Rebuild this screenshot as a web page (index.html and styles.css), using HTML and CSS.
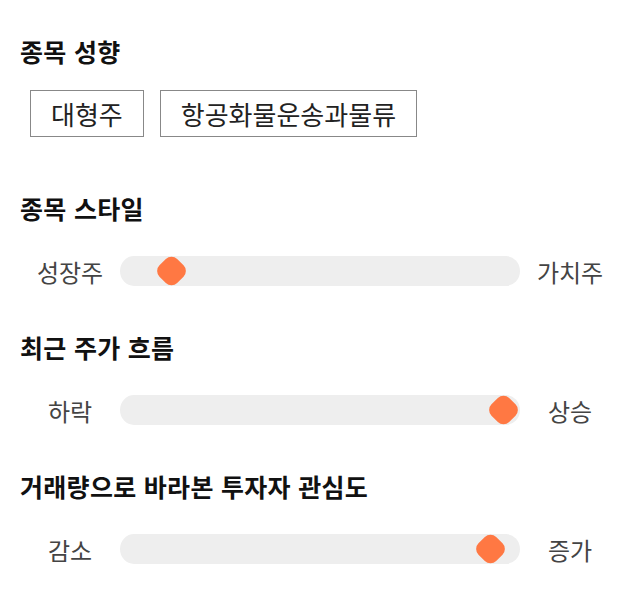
FILE: index.html
```html
<!DOCTYPE html>
<html lang="ko">
<head>
    <meta charset="UTF-8">
    <meta name="viewport" content="width=device-width, initial-scale=1.0">
    <title>종목 분석</title>
    <link rel="stylesheet" href="styles.css">
</head>
<body>
    <div class="container">
        <div class="section section-tags">
            <h2 class="title">종목 성향</h2>
            <div class="tags">
                <span class="tag">대형주</span>
                <span class="tag">항공화물운송과물류</span>
            </div>
        </div>

        <div class="section">
            <h2 class="title">종목 스타일</h2>
            <div class="slider-row">
                <span class="label">성장주</span>
                <div class="track">
                    <span class="thumb" style="left: 9.75%"></span>
                </div>
                <span class="label">가치주</span>
            </div>
        </div>

        <div class="section">
            <h2 class="title">최근 주가 흐름</h2>
            <div class="slider-row">
                <span class="label">하락</span>
                <div class="track">
                    <span class="thumb" style="left: 92.75%"></span>
                </div>
                <span class="label">상승</span>
            </div>
        </div>

        <div class="section">
            <h2 class="title">거래량으로 바라본 투자자 관심도</h2>
            <div class="slider-row">
                <span class="label">감소</span>
                <div class="track">
                    <span class="thumb" style="left: 89.5%"></span>
                </div>
                <span class="label">증가</span>
            </div>
        </div>
    </div>
</body>
</html>
```

FILE: styles.css
```css
* {
    margin: 0;
    padding: 0;
    box-sizing: border-box;
}

body {
    font-family: "Noto Sans CJK KR", "Noto Sans", sans-serif;
    background: #fff;
    color: #222;
}

.container {
    padding: 36px 20px 0;
}

.section {
    margin-bottom: 46px;
}

.section-tags {
    margin-bottom: 56px;
}

.title {
    font-size: 25px;
    font-weight: 700;
    line-height: 30px;
    letter-spacing: 0.3px;
    color: #111;
    margin-bottom: 33px;
}

.section-tags .title {
    margin-bottom: 24px;
}

.tags {
    display: flex;
    gap: 16px;
    padding-left: 10px;
}

.tag {
    display: flex;
    align-items: center;
    height: 47px;
    padding: 0 20px;
    border: 1px solid #888;
    font-size: 26px;
    color: #222;
}

.slider-row {
    display: flex;
    align-items: center;
    height: 30px;
}

.label {
    width: 100px;
    text-align: center;
    font-size: 24px;
    color: #444;
}

.track {
    position: relative;
    width: 400px;
    height: 30px;
    background: #eeeeee;
    border-radius: 14px / 15px;
}

.thumb {
    position: absolute;
    top: 50%;
    width: 25px;
    height: 25px;
    background: #ff7843;
    border-radius: 8px;
    transform: translate(0, -50%) rotate(45deg);
}
```
